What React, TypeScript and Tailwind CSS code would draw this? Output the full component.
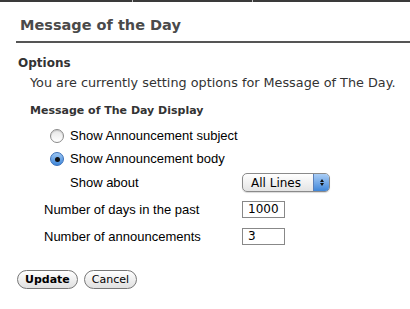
import { useState } from "react";

function Radio({ checked }: { checked: boolean }) {
  return checked ? (
    <span className="grid place-items-center w-[14px] h-[14px] rounded-full border border-[#3a6fb8] bg-gradient-to-b from-[#9cc6f2] to-[#3d87da]">
      <span className="block w-[5px] h-[5px] rounded-full bg-[#111]" />
    </span>
  ) : (
    <span className="block w-[14px] h-[14px] rounded-full border border-[#8a8a8a] bg-gradient-to-b from-[#e6e6e6] to-white shadow-[inset_0_1px_1px_rgba(0,0,0,0.15)]" />
  );
}

export default function App() {
  const [body, setBody] = useState(true);
  return (
    <div className="w-[410px] h-[309px] bg-white overflow-hidden font-['Liberation_Sans',sans-serif] text-[13px] text-black">
      {/* top tab strip */}
      <div className="flex h-[2px] bg-[#3a3a3a]">
        <div className="w-[133px] border-r border-[#bbb]" />
        <div className="w-[120px] border-r border-[#bbb]" />
      </div>

      <div className="pl-4">
        <h1 className="mt-[13px] pl-1 pb-[6px] border-b-2 border-[#555] font-['DejaVu_Sans',sans-serif] font-bold text-[14.5px] text-[#4a4a4a] leading-[20px]">
          Message of the Day
        </h1>

        <div className="pl-[2px] mt-[12px]">
          <h2 className="font-['DejaVu_Sans',sans-serif] font-bold text-[12px] text-[#333] leading-[16px]">Options</h2>
          <p className="pl-3 mt-[4px] font-['DejaVu_Sans',sans-serif] text-[12.8px] text-[#333] leading-[16px]">
            You are currently setting options for Message of The Day.
          </p>
          <h3 className="pl-3 mt-[13px] font-['DejaVu_Sans',sans-serif] font-bold text-[11px] text-[#333] leading-[14px]">
            Message of The Day Display
          </h3>

          <div className="pl-[32px] mt-[10px] flex flex-col gap-[7px]">
            <label className="flex items-center gap-[6px] h-[16px]" onClick={() => setBody(false)}>
              <Radio checked={!body} />
              <span>Show Announcement subject</span>
            </label>
            <label className="flex items-center gap-[6px] h-[16px]" onClick={() => setBody(true)}>
              <Radio checked={body} />
              <span>Show Announcement body</span>
            </label>
          </div>

          <div className="mt-[6px] flex items-center">
            <span className="pl-[52px] w-[224px]">Show about</span>
            <div className="w-[88px] h-[19px] rounded-[5px] border border-[#8a8a8a] bg-gradient-to-b from-white to-[#e4e4e4] flex items-center overflow-hidden shadow-[0_1px_1px_rgba(0,0,0,0.15)]">
              <span className="flex-1 pl-[8px] text-[12px] font-['DejaVu_Sans',sans-serif] leading-none">All Lines</span>
              <span className="w-[16px] h-full bg-gradient-to-b from-[#a9cdf5] to-[#3e86d9] border-l border-[#5b7fb8] flex flex-col items-center justify-center gap-[1px]">
                <span className="block w-0 h-0 border-x-[2.5px] border-x-transparent border-b-[3px] border-b-[#111]" />
                <span className="block w-0 h-0 border-x-[2.5px] border-x-transparent border-t-[3px] border-t-[#111]" />
              </span>
            </div>
          </div>

          <div className="mt-[7px] flex flex-col gap-[8px]">
            <div className="flex items-center">
              <span className="pl-[26px] w-[224px]">Number of days in the past</span>
              <div className="w-[43px] h-[17px] border border-[#888] pl-[5px] text-[12px] leading-[15px] font-['DejaVu_Sans',sans-serif]">1000</div>
            </div>
            <div className="flex items-center">
              <span className="pl-[26px] w-[224px]">Number of announcements</span>
              <div className="w-[43px] h-[17px] border border-[#888] pl-[5px] text-[12px] leading-[15px] font-['DejaVu_Sans',sans-serif]">3</div>
            </div>
          </div>
        </div>

        <div className="mt-[23px] pl-[1px] flex gap-[6px] font-['DejaVu_Sans',sans-serif] text-[11px]">
          <button className="h-[19px] px-[7px] rounded-full border border-[#777] bg-gradient-to-b from-white to-[#e0e0e0] font-bold leading-none">
            Update
          </button>
          <button className="h-[19px] px-[7px] rounded-full border border-[#777] bg-gradient-to-b from-white to-[#e0e0e0] leading-none">
            Cancel
          </button>
        </div>
      </div>
    </div>
  );
}
